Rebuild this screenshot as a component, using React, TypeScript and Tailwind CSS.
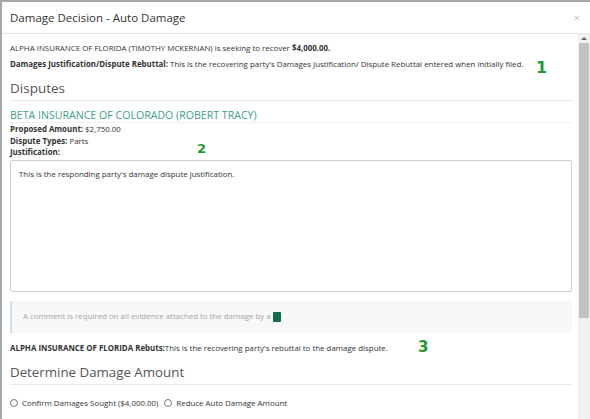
import React from "react";

const font = { fontFamily: '"Open Sans", "Liberation Sans", sans-serif' };

function Marker({ children, className }: { children: React.ReactNode; className: string }) {
  return (
    <span
      className={`absolute font-black leading-none text-[#1c9a2c] ${className}`}
      style={{ fontFamily: '"DejaVu Sans", "Liberation Sans", sans-serif' }}
    >
      {children}
    </span>
  );
}

function Radio({ label }: { label: string }) {
  return (
    <label className="flex items-center gap-[4px]">
      <span className="h-[8px] w-[8px] rounded-full border border-[#777] bg-white" />
      <span>{label}</span>
    </label>
  );
}

export default function App() {
  return (
    <div
      className="flex h-[419px] w-[590px] flex-col overflow-hidden border-l-2 border-t-2 border-[#a6a6a6] bg-white text-[#333]"
      style={font}
    >
      <div className="flex h-[32px] shrink-0 items-center justify-between border-b border-[#e5e5e5] pl-2 pr-[10px]">
        <h1 className="text-[11.5px] text-[#333]">Damage Decision - Auto Damage</h1>
        <span className="text-[11px] leading-none text-[#c4c4c4]">×</span>
      </div>

      <div className="flex min-h-0 flex-1">
        <div className="relative min-w-0 flex-1 pl-2 pr-[6px] text-[7.9px]">
          <p className="mt-[9px] leading-[11px]">
            ALPHA INSURANCE OF FLORIDA (TIMOTHY MCKERNAN) is seeking to recover{" "}
            <span className="font-bold">$4,000.00.</span>
          </p>
          <p className="mt-[5px] leading-[11px]">
            <span className="font-bold">Damages Justification/Dispute Rebuttal:</span> This is the recovering
            party's Damages Justification/ Dispute Rebuttal entered when initially filed.
          </p>
          <Marker className="left-[534px] top-[26px] text-[16px]">1</Marker>

          <h2 className="mt-[8px] border-b border-[#e8e8e8] pb-[2px] text-[13.5px] leading-[20px] text-[#555]">
            Disputes
          </h2>

          <h3 className="mt-[7px] border-b border-[#f0f0f0] text-[10.6px] leading-[14px] text-[#43a08e]">
            BETA INSURANCE OF COLORADO (ROBERT TRACY)
          </h3>
          <div className="mt-[1px] leading-[11.5px]">
            <p>
              <span className="font-bold">Proposed Amount:</span> $2,750.00
            </p>
            <p>
              <span className="font-bold">Dispute Types:</span> Parts
            </p>
            <p className="font-bold">Justification:</p>
          </div>
          <Marker className="left-[195px] top-[108px] text-[13px]">2</Marker>

          <div className="mt-[1px] h-[132px] rounded-[2px] border border-[#cfcfcf] px-[8px] pt-[8px] leading-[11px]">
            This is the responding party's damage dispute justification.
          </div>

          <div className="mt-[9px] flex h-[32px] items-center border-l-2 border-[#c9dff0] bg-[#f8f8f8] pl-[11px] text-[#a5a5a5]">
            A comment is required on all evidence attached to the damage by a
            <span className="ml-[2px] inline-block h-[10px] w-[8px] rounded-[1px] bg-[#156b4e]" />
          </div>

          <p className="mt-[10px] leading-[11px]">
            <span className="font-bold">ALPHA INSURANCE OF FLORIDA Rebuts:</span>This is the recovering party's
            rebuttal to the damage dispute.
          </p>
          <Marker className="left-[416px] top-[306px] text-[15px]">3</Marker>

          <h2 className="mt-[8px] border-b border-[#e8e8e8] pb-[2px] text-[13.3px] leading-[20px] text-[#555]">
            Determine Damage Amount
          </h2>

          <div className="mt-[13px] flex items-center gap-[6px] leading-[11px]">
            <Radio label="Confirm Damages Sought ($4,000.00)" />
            <Radio label="Reduce Auto Damage Amount" />
          </div>

          <p className="mt-[9px] font-bold leading-[11px]">Amount Awarded: *</p>
        </div>

        <div className="flex w-[12px] shrink-0 flex-col bg-[#f0f0f0]">
          <div className="flex h-[9px] items-center justify-center">
            <span className="h-0 w-0 border-x-[3px] border-b-[3px] border-x-transparent border-b-[#666]" />
          </div>
          <div className="mx-[1px] h-[275px] bg-[#c2c2c2]" />
        </div>
      </div>
    </div>
  );
}
